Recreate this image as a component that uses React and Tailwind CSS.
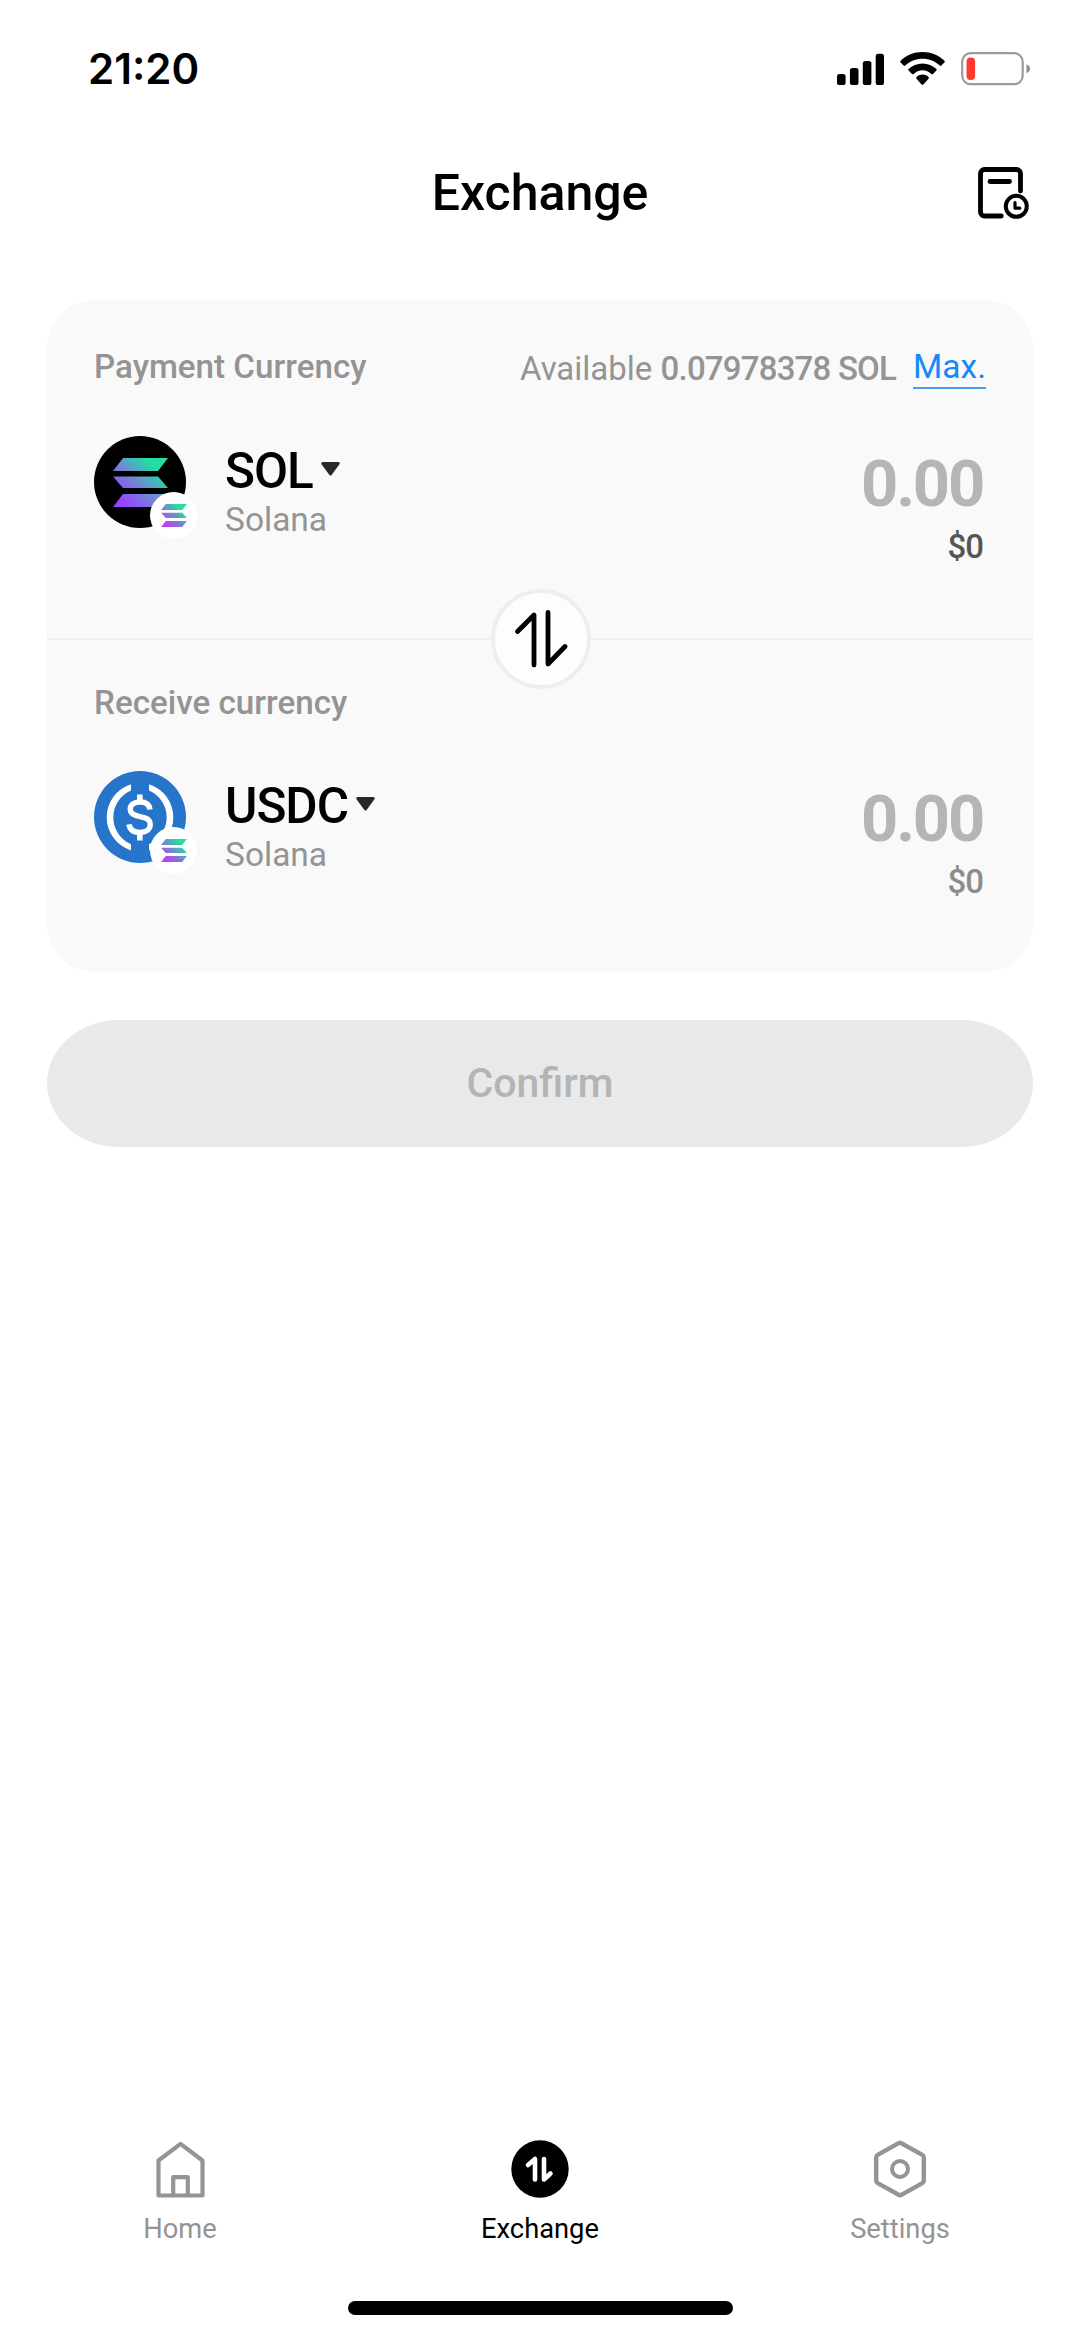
import React from 'react';

const tabs = [
    { label: 'Home', icon: HomeIcon },
    { label: 'Exchange', icon: ExchangeIcon, active: true },
    { label: 'Settings', icon: SettingsIcon },
];

function HomeIcon() {
    return (
        <svg className="w-[58px] h-[58px]" viewBox="0 0 58 58" fill="none" stroke="#949494" strokeWidth="4.2" strokeLinejoin="round">
            <path d="M7.500 20.500 29.500 3.800l22 16.700V55.500H7.500Z" />
            <path d="M22.200 55V37.200h14.600V55" />
        </svg>
    );
}

function ExchangeIcon() {
    return (
        <svg className="w-[58px] h-[58px]" viewBox="0 0 58 58" fill="none">
            <circle cx="29" cy="29" r="28.7" fill="#000" />
            <g stroke="#fff" strokeWidth="4.6" strokeLinecap="round" strokeLinejoin="round">
                <path d="m17 25 7-6v20.5" />
                <path d="M33 19v20.5l6.5-6" />
            </g>
        </svg>
    );
}

function SettingsIcon() {
    return (
        <svg className="w-[58px] h-[58px]" viewBox="0 0 58 58" fill="none" stroke="#949494" strokeLinejoin="round">
            <path d="M27.6 3.2a3 3 0 0 1 2.8 0L51.3 14.8a3 3 0 0 1 1.5 2.6V40.6a3 3 0 0 1-1.5 2.6L30.4 54.8a3 3 0 0 1-2.8 0L6.7 43.2a3 3 0 0 1-1.5-2.6V17.4a3 3 0 0 1 1.5-2.6Z" strokeWidth="4.4" />
            <circle cx="29" cy="29" r="8" strokeWidth="4" />
        </svg>
    );
}

function SolanaMark({ id, className, start = '#9945ff' }) {
    return (
        <svg className={className} viewBox="0 0 55 49" fill={`url(#${id})`}>
            <defs>
                <linearGradient id={id} x1="5" y1="48" x2="48" y2="2" gradientUnits="userSpaceOnUse">
                    <stop offset="0.1" stopColor={start} />
                    <stop offset="0.5" stopColor="#6c8bd0" />
                    <stop offset="0.85" stopColor="#22dfa4" />
                </linearGradient>
            </defs>
            <path d="M10 0H55L45 13H0Z" />
            <path d="M0 18.5H45L55 30H10Z" />
            <path d="M10 36H55L45 49H0Z" />
        </svg>
    );
}

function SolLogo() {
    return (
        <div className="size-[92px] rounded-full bg-black flex items-center justify-center">
            <SolanaMark id="sol" className="w-[55px] h-[49px]" />
        </div>
    );
}

function UsdcLogo() {
    return (
        <svg className="size-[92px]" viewBox="0 0 92 92" fill="none">
            <circle cx="46" cy="46" r="46" fill="#2775ca" />
            <path
                d="M37 13.2v6.2a29.3 29.3 0 0 0 0 53.8v6.2A34.7 34.7 0 0 1 37 13.2ZM55 13.2v6.2a29.3 29.3 0 0 1 0 53.8v6.2A34.7 34.7 0 0 0 55 13.2Z"
                fill="#fff"
            />
            <path d="M45.8 23.5v8M45.8 61v8.5" stroke="#fff" strokeWidth="5.6" />
            <path
                d="M56 38.5c-.6-5-4.3-7.5-10-7.5-6 0-9.8 2.9-9.8 7.3 0 4.7 4 6.2 9.8 7.3 6.3 1.2 10.2 2.7 10.2 7.9 0 4.900-4.200 7.900-10.200 7.900-6.400 0-10.300-2.900-11-8"
                stroke="#fff"
                strokeWidth="5.4"
            />
        </svg>
    );
}

function CurrencyRow({ symbol, network, logo, id, value, valueClass }) {
    return (
        <div className="flex justify-between h-[140px]">
            <div className="flex">
                <div className="relative size-[92px]">
                    {logo}
                    <div className="absolute left-[56px] top-[56px] size-[47px] rounded-full bg-white flex items-center justify-center">
                        <SolanaMark id={id} className="w-[28px] h-[23px]" start="#c23df0" />
                    </div>
                </div>
                <div className="ml-[39px] pt-[7px]">
                    <div className="flex items-center h-[56px]">
                        <span className="text-[49.5px] leading-[56px] font-medium tracking-[-1px]">{symbol}</span>
                        <svg className="w-[19px] h-[14px] ml-[8px] -mt-[4px]" viewBox="0 0 19 14" fill="#282828">
                            <path d="M1.5 0H17.5Q19.5 .8 18.3 2.6L10.6 13Q9.5 14.2 8.4 13L.7 2.6Q-.5 .8 1.5 0Z" />
                        </svg>
                    </div>
                    <div className="text-[33.5px] leading-[42px] text-[#949494]">{network}</div>
                </div>
            </div>
            <div className="flex flex-col items-end pt-[13px] pr-[3px]">
                <span className="text-[65px] leading-[70px] font-bold tracking-[-2.2px] text-[#b5b5b5]">0.00</span>
                <span className={valueClass}>{value}</span>
            </div>
        </div>
    );
}

export default function App() {
    return (
        <div className="w-[1080px] h-[2337px] bg-white flex flex-col font-[Roboto,sans-serif] text-black overflow-hidden">
            {/* status bar */}
            <div className="h-[138px] shrink-0 flex items-center justify-between pl-[88px] pr-[50px]">
                <span className="font-['Inter',sans-serif] font-semibold text-[42px] leading-none">21:20</span>
                <div className="flex items-center gap-[16px]">
                    <svg className="w-[47px] h-[34px]" viewBox="0 0 47 34">
                        <rect x="0" y="22" width="8.6" height="11" rx="2.6" />
                        <rect x="12.9" y="16" width="8.6" height="17" rx="2.6" />
                        <rect x="25.8" y="9" width="8.6" height="24" rx="2.6" />
                        <rect x="38.7" y="1.7" width="8.3" height="31.3" rx="2.6" />
                    </svg>
                    <svg className="w-[45px] h-[34px]" viewBox="0 0 45 34">
                        <path d="M22.5 0C31 0 38.7 3.3 44.4 8.7Q45.2 9.6 44.4 10.5L41.4 13.6Q40.5 14.3 39.7 13.6C35.2 9.4 29.2 6.8 22.5 6.8S9.8 9.4 5.3 13.6Q4.5 14.3 3.6 13.6L.6 10.5Q-.2 9.6 .6 8.7C6.3 3.3 14 0 22.5 0Z" />
                        <path d="M22.5 11.4C27.9 11.4 32.8 13.5 36.4 16.9Q37.2 17.7 36.4 18.6L33 22Q32.2 22.7 31.3 22C29 19.8 25.9 18.3 22.5 18.3S16 19.8 13.7 22Q12.8 22.7 12 22L8.6 18.6Q7.8 17.7 8.6 16.9C12.2 13.5 17.1 11.4 22.5 11.4Z" />
                        <path d="M22.5 22.6C24.9 22.6 27 23.5 28.5 24.9Q29.3 25.8 28.5 26.7L23.4 32.4Q22.5 33.2 21.6 32.4L16.5 26.7Q15.7 25.8 16.5 24.9C18 23.5 20.1 22.6 22.5 22.6Z" />
                    </svg>
                    <svg className="w-[69px] h-[34px]" viewBox="0 0 69 34">
                        <rect x="1.2" y="1.2" width="60.5" height="31" rx="8.5" fill="none" stroke="#9b9b9b" strokeWidth="2.2" />
                        <path d="M65.5 12.3C68.2 13.4 69 15 69 16.8S68.2 20.2 65.5 21.3Z" fill="#8e8e8e" />
                        <rect x="5.5" y="5.5" width="8.6" height="22.5" rx="4" fill="#ff3b30" />
                    </svg>
                </div>
            </div>

            {/* header */}
            <div className="h-[109px] shrink-0 grid grid-cols-3 items-center">
                <h1 className="col-start-2 text-center text-[50px] leading-[60px] font-medium">Exchange</h1>
                <svg className="justify-self-end mr-[51px] w-[51px] h-[52px]" viewBox="0 0 51 52" fill="none" stroke="#000" strokeWidth="4.8" strokeLinecap="round" strokeLinejoin="round">
                    <path d="M23.3 49H6.5A4 4 0 0 1 2.5 45V6.5A4 4 0 0 1 6.5 2.5H38.5A4 4 0 0 1 42.5 6.500V24" />
                    <path d="M12 14.500H31.500" />
                    <circle cx="38.300" cy="39.300" r="10.500" strokeWidth="4" />
                    <path d="M37 35.500V41.200H41.800" strokeWidth="3.200" />
                </svg>
            </div>

            {/* exchange form */}
            <div className="relative mt-[53px] ml-[47px] w-[986px] h-[672px] shrink-0 rounded-[48px] bg-[#f9f9f9]">
                <div className="h-[340px] border-b-2 border-[#f0f0f0] pt-[47px] px-[47px]">
                    <div className="flex justify-between h-[40px] mb-[49px]">
                        <span className="text-[33.2px] leading-[40px] font-medium text-[#949494]">Payment Currency</span>
                        <div className="flex">
                            <span className="text-[33px] leading-[44px] text-[#949494]">
                                Available <span className="tracking-[-0.8px] font-medium">0.07978378 SOL</span>
                            </span>
                            <span className="ml-[17px] h-[42px] border-b-2 border-[#4a9cf0] text-[33.5px] leading-[40px] text-[#1688fb]">Max.</span>
                        </div>
                    </div>
                    <CurrencyRow
                        symbol="SOL"
                        network="Solana"
                        logo={<SolLogo />}
                        id="sol-badge"
                        value="$0"
                        valueClass="text-[33px] leading-[56px] font-medium tracking-[-1px] text-[#555]"
                    />
                </div>
                <div className="pt-[43px] px-[47px]">
                    <div className="h-[40px] mb-[48px] text-[33.2px] leading-[40px] font-medium text-[#949494]">Receive currency</div>
                    <CurrencyRow
                        symbol="USDC"
                        network="Solana"
                        logo={<UsdcLogo />}
                        id="usdc-badge"
                        value="$0"
                        valueClass="text-[33px] leading-[56px] font-medium tracking-[-1px] text-[#8c8c8c]"
                    />
                </div>
                <button className="absolute left-[444px] top-[289px] size-[100px] rounded-full border-4 border-[#efedee] bg-[#fefcfd] flex items-center justify-center">
                    <svg className="w-[54px] h-[58px]" viewBox="0 0 54 58" fill="none" stroke="#000" strokeWidth="4.8" strokeLinecap="round" strokeLinejoin="round">
                        <path d="M3.5 21.5 20 5V55" />
                        <path d="M34 2.5V54L51 36.5" />
                    </svg>
                </button>
            </div>

            <button className="mt-[48px] ml-[47px] w-[986px] h-[127px] shrink-0 rounded-[72px/63.5px] bg-[#e9e9e9] text-[41px] font-medium text-[#b4b4b4]">
                Confirm
            </button>

            {/* bottom tabs */}
            <div className="mt-auto h-[161px] shrink-0 grid grid-cols-3">
                {tabs.map((tab) => (
                    <div key={tab.label} className={`flex flex-col items-center ${tab.active ? 'text-black' : 'text-[#949494]'}`}>
                        <tab.icon />
                        <span className="mt-[14px] text-[27.3px] leading-[34px]">{tab.label}</span>
                    </div>
                ))}
            </div>
            <div className="mx-auto mb-[22px] w-[385px] h-[14px] shrink-0 rounded-full bg-black" />
        </div>
    );
}
